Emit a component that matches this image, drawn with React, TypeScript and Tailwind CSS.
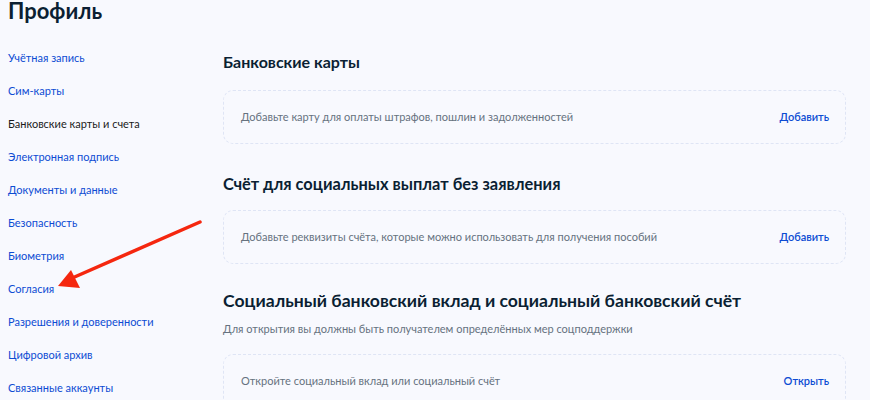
import React from 'react';

const menu = [
  { label: 'Учётная запись' },
  { label: 'Сим-карты' },
  { label: 'Банковские карты и счета', active: true },
  { label: 'Электронная подпись' },
  { label: 'Документы и данные' },
  { label: 'Безопасность' },
  { label: 'Биометрия' },
  { label: 'Согласия' },
  { label: 'Разрешения и доверенности' },
  { label: 'Цифровой архив' },
  { label: 'Связанные аккаунты' },
];

const Card = ({ text, action }: { text: string; action: string }) => (
  <div className="h-[54px] rounded-[10px] border border-dashed border-[#dfe5f5] flex items-center justify-between pl-[17px] pr-[16px]">
    <span className="text-[11px] text-[#66727f]">{text}</span>
    <span className="text-[11px] font-semibold text-[#0d4cd3]">{action}</span>
  </div>
);

export default function App() {
  return (
    <div
      className="relative w-[870px] h-[400px] overflow-hidden bg-[#f8f9fe] text-[#0b1f33]"
      style={{ fontFamily: 'Lato, "Noto Sans", sans-serif' }}
    >
      <h1 className="pl-[8px] -mt-[2px] text-[22px] leading-[26px] font-bold text-[#0b1f33]">Профиль</h1>

      <div className="flex mt-[18px]">
        {/* sidebar */}
        <ul className="w-[223px] pl-[8px] shrink-0">
          {menu.map((m) => (
            <li
              key={m.label}
              className={
                'h-[33px] flex items-center text-[11px] ' +
                (m.active ? 'text-[#1b1b1b]' : 'text-[#0d4cd3]')
              }
            >
              {m.label}
            </li>
          ))}
        </ul>

        {/* content */}
        <div className="flex-1 pr-[24px] pt-[8px]">
          <h2 className="text-[16px] leading-[24px] font-bold">Банковские карты</h2>
          <div className="mt-[16px]">
            <Card text="Добавьте карту для оплаты штрафов, пошлин и задолженностей" action="Добавить" />
          </div>

          <h2 className="mt-[28px] text-[16.4px] leading-[24px] font-bold">Счёт для социальных выплат без заявления</h2>
          <div className="mt-[14px]">
            <Card text="Добавьте реквизиты счёта, которые можно использовать для получения пособий" action="Добавить" />
          </div>

          <h2 className="mt-[25px] text-[17.6px] leading-[24px] font-bold">
            Социальный банковский вклад и социальный банковский счёт
          </h2>
          <p className="mt-[8px] text-[11px] leading-[16px] text-[#66727f]">
            Для открытия вы должны быть получателем определённых мер соцподдержки
          </p>
          <div className="mt-[17px]">
            <Card text="Откройте социальный вклад или социальный счёт" action="Открыть" />
          </div>
        </div>
      </div>

      {/* annotation arrow */}
      <svg className="absolute left-0 top-0 pointer-events-none" width="870" height="400">
        <line x1="200" y1="222" x2="70" y2="279" stroke="#f5270f" strokeWidth="3.5" strokeLinecap="round" />
        <polygon points="58,286 71,270 80,288" fill="#f5270f" />
      </svg>
    </div>
  );
}
